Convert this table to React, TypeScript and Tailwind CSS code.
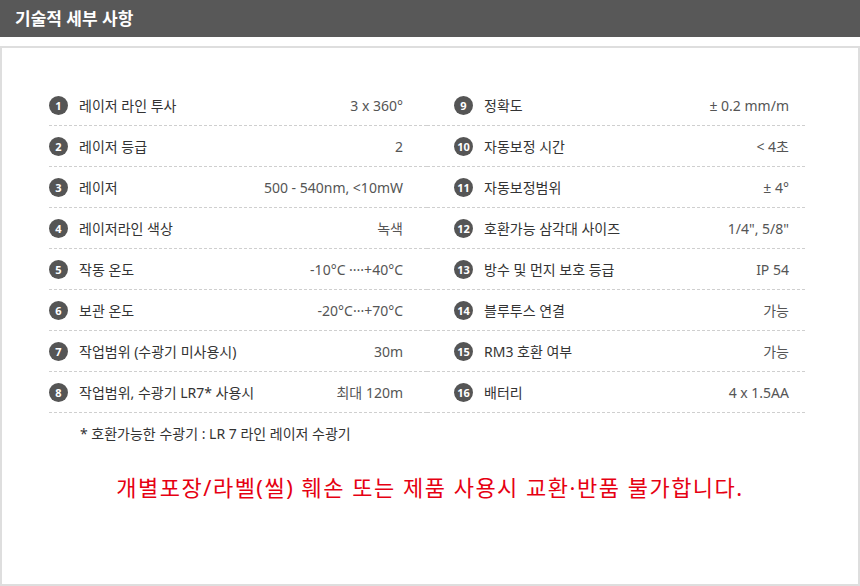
const left = [
  ["레이저 라인 투사", "3 x 360°"],
  ["레이저 등급", "2"],
  ["레이저", "500 - 540nm, <10mW"],
  ["레이저라인 색상", "녹색"],
  ["작동 온도", "-10°C ····+40°C"],
  ["보관 온도", "-20°C···+70°C"],
  ["작업범위 (수광기 미사용시)", "30m"],
  ["작업범위, 수광기 LR7* 사용시", "최대 120m"],
];

const right = [
  ["정확도", "± 0.2 mm/m"],
  ["자동보정 시간", "< 4초"],
  ["자동보정범위", "± 4°"],
  ["호환가능 삼각대 사이즈", "1/4\", 5/8\""],
  ["방수 및 먼지 보호 등급", "IP 54"],
  ["블루투스 연결", "가능"],
  ["RM3 호환 여부", "가능"],
  ["배터리", "4 x 1.5AA"],
];

function Row({ n, label, value, side }: { n: number; label: string; value: string; side: "l" | "r" }) {
  return (
    <div
      className={
        "flex h-[41px] items-center border-b border-dashed border-[#cfcfcf] " +
        (side === "l" ? "pr-[24px]" : "pl-[27px] pr-[16px]")
      }
    >
      <span className="flex h-[19px] w-[19px] shrink-0 items-center justify-center rounded-full bg-[#555] text-[11px] font-bold leading-none text-white">
        {n}
      </span>
      <span className="ml-[11px] text-[14px] text-[#333]">{label}</span>
      <span className="ml-auto text-[14px] text-[#555]">{value}</span>
    </div>
  );
}

export default function App() {
  return (
    <div
      className="h-[586px] w-[860px] bg-white"
      style={{ fontFamily: '"Noto Sans", "Noto Sans CJK KR", sans-serif' }}
    >
      <div className="flex h-[37px] items-center bg-[#585858] pl-[15px] text-[17px] font-bold text-white">
        기술적 세부 사항
      </div>
      <div className="mt-[9px] h-[540px] border-2 border-[#dedede]">
        <div className="ml-[47px] mt-[37px] grid w-[756px] grid-cols-2">
          <div className="flex flex-col">
            {left.map(([l, v], i) => (
              <Row key={i} n={i + 1} label={l} value={v} side="l" />
            ))}
          </div>
          <div className="flex flex-col">
            {right.map(([l, v], i) => (
              <Row key={i} n={i + 9} label={l} value={v} side="r" />
            ))}
          </div>
        </div>
        <div className="ml-[78px] mt-[10px] text-[14px] text-[#333]">* 호환가능한 수광기 : LR 7 라인 레이저 수광기</div>
        <div className="mt-[27px] text-center text-[22px] tracking-[1.5px] text-[#e60012]">
          개별포장/라벨(씰) 훼손 또는 제품 사용시 교환·반품 불가합니다.
        </div>
      </div>
    </div>
  );
}
